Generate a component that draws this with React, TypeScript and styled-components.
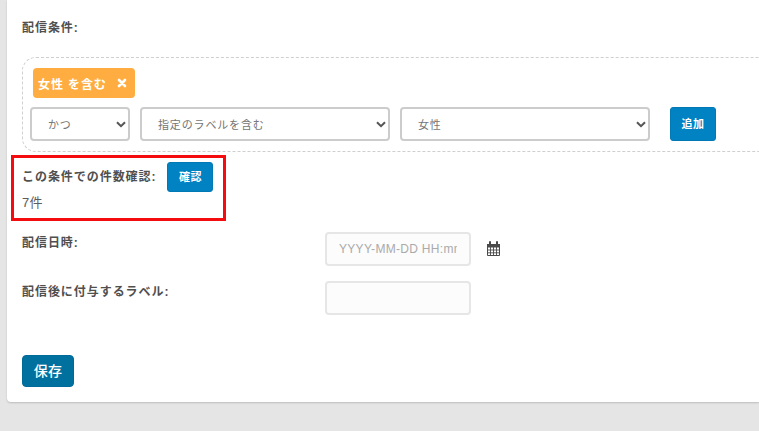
import React from "react";
import styled, { createGlobalStyle } from "styled-components";

const Global = createGlobalStyle`
  html, body { margin: 0; padding: 0; height: 431px; overflow: hidden; background: #e5e5e5; }
  body { font-family: "Liberation Sans", "Noto Sans CJK JP", sans-serif; color: #4f4f4f; font-size: 12px; }
  * { box-sizing: border-box; }
`;

const Page = styled.div`
  width: 759px;
  height: 431px;
  overflow: hidden;
  padding: 0 0 4px 7px;
`;

const Card = styled.main`
  height: 402px;
  background: #fff;
  border-radius: 0 0 0 4px;
  box-shadow: 0 1px 2px rgba(0, 0, 0, 0.18);
  padding: 20px 0 0 15px;
  overflow: hidden;
`;

const Label = styled.div`
  font-size: 12px;
  line-height: 17px;
  font-weight: 700;
  letter-spacing: 0.95px;
  color: #4f4f4f;
`;

const Group = styled.section`
  margin-top: 20px;
  margin-right: -30px;
  height: 95px;
  border: 1px dashed #cfcfcf;
  border-radius: 14px;
  padding: 10px 0 0 7px;
`;

const Tag = styled.div`
  margin-left: 3px;
  width: 102px;
  height: 30px;
  border-radius: 4px;
  background: #ffad41;
  color: #fff;
  font-size: 12px;
  font-weight: 700;
  letter-spacing: 0.9px;
  display: flex;
  align-items: center;
  padding-left: 5px;
  gap: 10px;
`;

const RemoveIcon = styled.svg`
  width: 10px;
  height: 10px;
  flex: none;
`;

const ConditionRow = styled.div`
  margin-top: 9px;
  display: flex;
  gap: 10px;
`;

const SelectBox = styled.div<{ $w: number }>`
  position: relative;
  width: ${(p) => p.$w}px;
  height: 34px;
`;

const NativeSelect = styled.select`
  appearance: none;
  width: 100%;
  height: 100%;
  border: 2px solid #cccccc;
  border-radius: 4px;
  background: #fff;
  color: #757575;
  font-family: inherit;
  font-size: 11px;
  letter-spacing: 0.85px;
  padding: 2px 16px 0;
  outline: none;
`;

const Chevron = styled.svg`
  position: absolute;
  right: 4px;
  top: 14px;
  width: 10px;
  height: 7px;
`;

const AddButton = styled.button`
  margin-left: 10px;
  width: 46px;
  height: 34px;
  border: 1px solid #0079b5;
  border-radius: 3px;
  background: #0082c3;
  color: #fff;
  font-family: inherit;
  font-size: 11px;
  font-weight: 700;
  letter-spacing: 0.5px;
  padding: 0 0 2px;
`;

const CheckSection = styled.section`
  position: relative;
  margin-top: 10px;
  height: 70px;
`;

const CheckRow = styled.div`
  display: flex;
  align-items: center;
  gap: 11px;
  height: 30px;
`;

const Highlight = styled.div`
  position: absolute;
  left: -11px;
  top: -7px;
  width: 215px;
  height: 66px;
  border: 3px solid #f40c10;
  pointer-events: none;
`;

const ConfirmButton = styled(AddButton)`
  margin-left: 0;
  width: 46px;
  height: 30px;
  flex: none;
`;

const Count = styled.div`
  margin-top: 1px;
  font-size: 13px;
  line-height: 19px;
  letter-spacing: 0.3px;
  color: #5c5c5c;
`;

const FieldRow = styled.div<{ $mt: number }>`
  margin-top: ${(p) => p.$mt}px;
  display: flex;
  align-items: flex-start;
`;

const FieldLabel = styled(Label)`
  width: 303px;
  padding-top: 3px;
`;

const TextInput = styled.input`
  width: 146px;
  height: 34px;
  border: 2px solid #e6e6e6;
  border-radius: 4px;
  background: #fcfcfc;
  padding: 0 12px;
  font-family: "Liberation Sans", sans-serif;
  font-size: 12px;
  letter-spacing: 0.3px;
  outline: none;
  &::placeholder { color: #aaaaaa; opacity: 1; max-width: 118px; overflow: hidden; }
`;

const CalendarIcon = styled.svg`
  margin: 9px 0 0 16px;
  width: 13px;
  height: 15px;
  flex: none;
`;

const SaveButton = styled.button`
  display: block;
  margin-top: 40px;
  width: 52px;
  height: 32px;
  border: 1px solid #006a99;
  border-radius: 4px;
  background: #00709f;
  color: #fff;
  font-family: inherit;
  font-size: 14px;
  font-weight: 500;
  letter-spacing: 0.3px;
  padding: 0 0 2px;
`;

const ChevronIcon = () => (
  <Chevron viewBox="0 0 10 7">
    <path d="M1 1.2 5 5.2 9 1.2" fill="none" stroke="#555" strokeWidth="2" />
  </Chevron>
);

const Select = ({ w, value }: { w: number; value: string }) => (
  <SelectBox $w={w}>
    <NativeSelect defaultValue={value}>
      <option>{value}</option>
    </NativeSelect>
    <ChevronIcon />
  </SelectBox>
);

export default function App() {
  return (
    <Page>
      <Global />
      <Card>
        <Label>配信条件:</Label>
        <Group>
          <Tag>
            <span>女性 を含む</span>
            <RemoveIcon viewBox="0 0 10 10">
              <path d="M2 2 8 8M8 2 2 8" stroke="#fff" strokeWidth="2.6" strokeLinecap="round" />
            </RemoveIcon>
          </Tag>
          <ConditionRow>
            <Select w={100} value="かつ" />
            <Select w={250} value="指定のラベルを含む" />
            <Select w={250} value="女性" />
            <AddButton>追加</AddButton>
          </ConditionRow>
        </Group>
        <CheckSection>
          <CheckRow>
            <Label>この条件での件数確認:</Label>
            <ConfirmButton>確認</ConfirmButton>
          </CheckRow>
          <Count>7件</Count>
          <Highlight />
        </CheckSection>
        <FieldRow $mt={0}>
          <FieldLabel>配信日時:</FieldLabel>
          <TextInput placeholder="YYYY-MM-DD HH:mm" />
          <CalendarIcon viewBox="0 0 13 15">
            <path d="M.5 3.5h12v11H.5z" fill="none" stroke="#4a4a4a" />
            <path d="M0 3h13v3.5H0z" fill="#4a4a4a" />
            <path d="M0 9h13M0 11.8h13M3.5 6v8M6.5 6v8M9.5 6v8" stroke="#4a4a4a" strokeWidth=".9" />
            <path d="M3 1v3M10 1v3" stroke="#4a4a4a" strokeWidth="2" strokeLinecap="round" />
          </CalendarIcon>
        </FieldRow>
        <FieldRow $mt={15}>
          <FieldLabel>配信後に付与するラベル:</FieldLabel>
          <TextInput />
        </FieldRow>
        <SaveButton>保存</SaveButton>
      </Card>
    </Page>
  );
}
